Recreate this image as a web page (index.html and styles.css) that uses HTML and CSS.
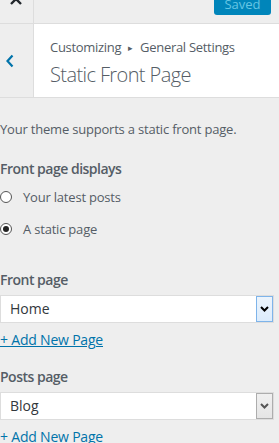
FILE: index.html
```html
<!DOCTYPE html>
<html>
<head>
  <title>Static Front Page</title>
  <link rel="stylesheet" href="styles.css">
</head>
<body>
  <div class="topbar">
    <div class="close">
      <svg width="14" height="14" viewBox="0 0 14 14"><path d="M2 2 L12 12 M12 2 L2 12" stroke="#23282d" stroke-width="2.4" fill="none"/></svg>
    </div>
    <div class="spacer"></div>
    <button class="saved">Saved</button>
  </div>

  <div class="header">
    <div class="back">
      <svg width="10" height="14" viewBox="0 0 10 14"><path d="M7.5 1.5 L2.5 7 L7.5 12.5" stroke="#0073aa" stroke-width="2.2" fill="none"/></svg>
    </div>
    <div class="title">
      <div class="crumb">Customizing <span class="sep">&#9656;</span> General Settings</div>
      <h2>Static Front Page</h2>
    </div>
  </div>

  <div class="content">
    <p class="desc">Your theme supports a static front page.</p>

    <div class="field-title">Front page displays</div>
    <label class="radio"><span class="dot"></span>Your latest posts</label>
    <label class="radio checked"><span class="dot"></span>A static page</label>

    <div class="field-title label-gap">Front page</div>
    <div class="select focused">
      <span class="value">Home</span>
      <span class="arrow"><svg width="9" height="6" viewBox="0 0 9 6"><path d="M1 1 L4.5 4.5 L8 1" stroke="#000" stroke-width="2" fill="none"/></svg></span>
    </div>
    <a class="add" href="#">+ Add New Page</a>

    <div class="field-title label-gap2">Posts page</div>
    <div class="select">
      <span class="value">Blog</span>
      <span class="arrow"><svg width="9" height="6" viewBox="0 0 9 6"><path d="M1 1 L4.5 4.5 L8 1" stroke="#555" stroke-width="2" fill="none"/></svg></span>
    </div>
    <a class="add" href="#">+ Add New Page</a>
  </div>
</body>
</html>
```

FILE: styles.css
```css
body {
  margin: 0;
  padding: 0;
  font-family: 'Open Sans', sans-serif;
  background-color: #eee;
  color: #555d66;
  width: 279px;
  overflow: hidden;
}

.topbar {
  display: flex;
  align-items: flex-end;
  height: 23px;
  border-bottom: 1px solid #ddd;
  overflow: hidden;
}

.close {
  width: 34px;
  height: 23px;
  border-right: 1px solid #ddd;
  box-sizing: border-box;
  display: flex;
  justify-content: center;
  align-items: flex-start;
}

.close svg {
  margin-top: -8px;
  margin-right: 2px;
}

.spacer {
  flex: 1;
}

.saved {
  width: 57px;
  height: 28px;
  margin: 0 8px 8px 0;
  border: none;
  border-radius: 3px;
  background-color: #0085ba;
  color: #66c6e4;
  font-family: 'Open Sans', sans-serif;
  font-size: 13px;
  padding: 6px 0 0;
  line-height: 20px;
  box-sizing: border-box;
}

.header {
  display: flex;
  height: 73px;
  background-color: #fff;
  border-bottom: 1px solid #ddd;
}

.back {
  width: 34px;
  border-right: 1px solid #ddd;
  box-sizing: border-box;
  background-color: #eee;
  display: flex;
  align-items: center;
  padding-left: 5px;
}

.back svg {
  margin-top: 1px;
}

.title {
  padding: 13px 0 0 16px;
}

.crumb {
  font-size: 13px;
  line-height: 20px;
  letter-spacing: -0.3px;
}

.crumb .sep {
  font-size: 9px;
  margin: 0 4px;
  position: relative;
  top: -1px;
}

.title h2 {
  margin: 2px 0 0;
  font-size: 20px;
  font-weight: 300;
  line-height: 28px;
  letter-spacing: -0.6px;
}

.content {
  padding-top: 21px;
}

.desc {
  margin: 0;
  font-size: 13px;
  line-height: 20px;
  letter-spacing: -0.2px;
}

.field-title {
  margin-top: 20px;
  font-size: 14px;
  font-weight: 600;
  line-height: 20px;
  letter-spacing: -0.5px;
}

.label-gap {
  margin-top: 31px;
}

.label-gap2 {
  margin-top: 17px;
}

.radio {
  display: flex;
  align-items: center;
  font-size: 13px;
  line-height: 20px;
  letter-spacing: -0.2px;
  margin-top: 8px;
}

.radio + .radio {
  margin-top: 12px;
}

.dot {
  width: 12px;
  height: 12px;
  border: 1px solid #555;
  border-radius: 50%;
  background-color: #fff;
  box-sizing: border-box;
  margin-right: 11px;
  display: flex;
  align-items: center;
  justify-content: center;
}

.checked .dot::after {
  content: '';
  width: 6px;
  height: 6px;
  border-radius: 50%;
  background-color: #222;
}

.select {
  display: flex;
  align-items: stretch;
  width: 274px;
  height: 28px;
  margin-top: 5px;
  box-sizing: border-box;
  border: 1px solid #ddd;
  background-color: #fff;
  font-size: 14px;
  color: #32373c;
}

.select .value {
  flex: 1;
  padding-left: 9px;
  line-height: 26px;
}

.select .arrow {
  width: 17px;
  box-sizing: border-box;
  border: 1px solid #adadad;
  background: linear-gradient(#f0f0f0, #e5e5e5);
  display: flex;
  align-items: center;
  justify-content: center;
}

.focused .arrow {
  border-color: #7eb4ea;
  background: linear-gradient(#ecf4fc, #dcecfc);
}

.add {
  display: block;
  margin-top: 7px;
  font-size: 14px;
  line-height: 20px;
  letter-spacing: -0.2px;
  color: #0073aa;
}
```
